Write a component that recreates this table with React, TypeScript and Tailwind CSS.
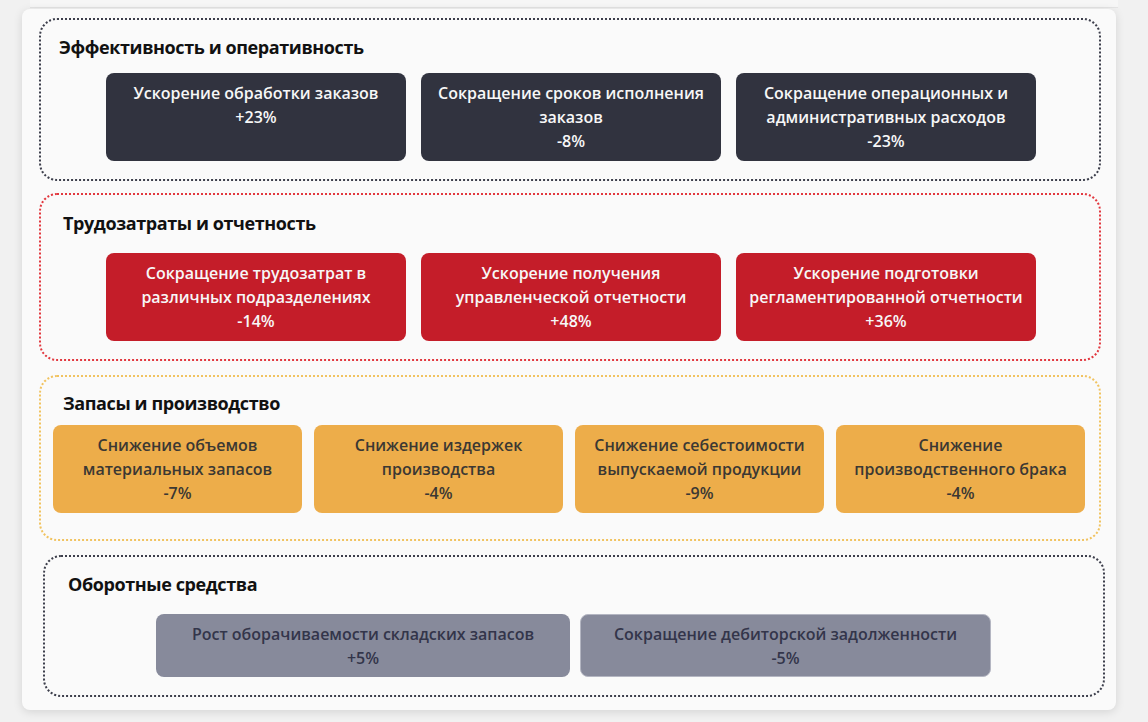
type Metric = { title: string; value: string };

const efficiency: Metric[] = [
  { title: "Ускорение обработки заказов", value: "+23%" },
  { title: "Сокращение сроков исполнения заказов", value: "-8%" },
  { title: "Сокращение операционных и административных расходов", value: "-23%" },
];

const labor: Metric[] = [
  { title: "Сокращение трудозатрат в различных подразделениях", value: "-14%" },
  { title: "Ускорение получения управленческой отчетности", value: "+48%" },
  { title: "Ускорение подготовки регламентированной отчетности", value: "+36%" },
];

const stock: Metric[] = [
  { title: "Снижение объемов материальных запасов", value: "-7%" },
  { title: "Снижение издержек производства", value: "-4%" },
  { title: "Снижение себестоимости выпускаемой продукции", value: "-9%" },
  { title: "Снижение производственного брака", value: "-4%" },
];

const capital: Metric[] = [
  { title: "Рост оборачиваемости складских запасов", value: "+5%" },
  { title: "Сокращение дебиторской задолженности", value: "-5%" },
];

function Card({ item, className }: { item: Metric; className: string }) {
  return (
    <div
      className={`rounded-lg px-3 pt-2 text-center text-[16px] leading-6 font-semibold ${className}`}
    >
      <div>{item.title}</div>
      <div>{item.value}</div>
    </div>
  );
}

export default function App() {
  return (
    <div
      className="h-[722px] w-[1148px] overflow-hidden bg-[#f1f1f1]"
      style={{ fontFamily: '"Open Sans", "Noto Sans", sans-serif' }}
    >
      <div className="mx-[30px] h-[8px] border-b border-[#e4e4e4] bg-[#f6f6f6]" />
      <div className="ml-[22px] mt-[1px] h-[701px] w-[1094px] rounded-lg bg-[#fafafa] pt-[9px] shadow-[0_2px_10px_rgba(0,0,0,0.12)]">
        {/* Эффективность */}
        <section className="ml-[17px] h-[163px] w-[1062px] rounded-[18px] border-2 border-dotted border-[#3d3f4c] pl-[18px] pt-[14px]">
          <h2 className="text-[18px] leading-[26px] font-bold tracking-[-0.4px] text-[#111]">
            Эффективность и оперативность
          </h2>
          <div className="mt-[13px] flex justify-center gap-[15px] pr-[16px]">
            {efficiency.map((m) => (
              <Card
                key={m.title}
                item={m}
                className="h-[88px] w-[300px] bg-[#31333f] text-[#f7f7f7]"
              />
            ))}
          </div>
        </section>

        {/* Трудозатраты */}
        <section className="ml-[17px] mt-[12px] h-[168px] w-[1062px] rounded-[18px] border-2 border-dotted border-[#e2383f] pl-[22px] pt-[15px]">
          <h2 className="text-[18px] leading-[26px] font-bold tracking-[-0.4px] text-[#111]">
            Трудозатраты и отчетность
          </h2>
          <div className="mt-[17px] flex justify-center gap-[15px] pr-[20px]">
            {labor.map((m) => (
              <Card
                key={m.title}
                item={m}
                className="h-[88px] w-[300px] bg-[#c41d29] text-[#f7f7f7]"
              />
            ))}
          </div>
        </section>

        {/* Запасы */}
        <section className="ml-[17px] mt-[14px] h-[166px] w-[1062px] rounded-[18px] border-2 border-dotted border-[#f1c360] pl-[22px] pt-[13px]">
          <h2 className="text-[18px] leading-[26px] font-bold tracking-[-0.4px] text-[#111]">
            Запасы и производство
          </h2>
          <div className="-ml-[10px] mt-[9px] flex gap-[12px]">
            {stock.map((m) => (
              <Card
                key={m.title}
                item={m}
                className="h-[88px] w-[249px] bg-[#edad4a] text-[#3b3833]"
              />
            ))}
          </div>
        </section>

        {/* Оборотные средства */}
        <section className="ml-[21px] mt-[14px] h-[142px] w-[1062px] rounded-[18px] border-2 border-dotted border-[#3d3f4c] pl-[23px] pt-[14px]">
          <h2 className="text-[18px] leading-[26px] font-bold tracking-[-0.4px] text-[#111]">
            Оборотные средства
          </h2>
          <div className="ml-[88px] mt-[17px] flex gap-[10px]">
            <Card
              item={capital[0]}
              className="h-[63px] w-[414px] bg-[#878a9b] text-[#33354a]"
            />
            <Card
              item={capital[1]}
              className="h-[63px] w-[411px] border border-[#b4b6c2] bg-[#878a9b] pt-[7px] text-[#33354a]"
            />
          </div>
        </section>
      </div>
    </div>
  );
}
